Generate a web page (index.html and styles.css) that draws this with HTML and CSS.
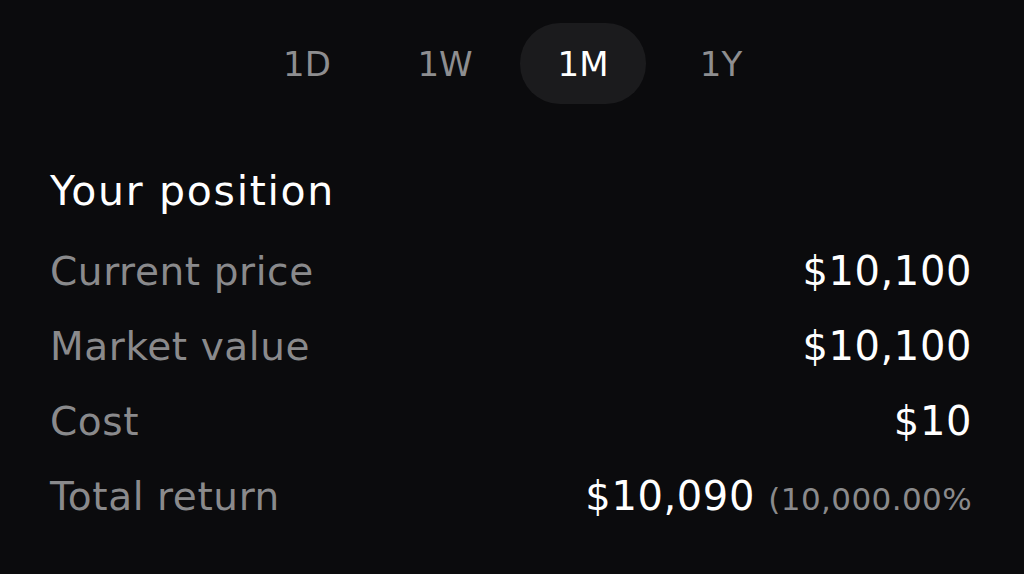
FILE: index.html
```html
<!DOCTYPE html>
<html lang="en">
<head>
    <meta charset="UTF-8">
    <title>Position</title>
    <link rel="stylesheet" href="styles.css">
</head>
<body>
    <nav class="range-tabs">
        <button class="range-tab">1D</button>
        <button class="range-tab">1W</button>
        <button class="range-tab active">1M</button>
        <button class="range-tab">1Y</button>
    </nav>

    <section class="position">
        <h2>Your position</h2>
        <div class="row">
            <span class="label">Current price</span>
            <span class="value">$10,100</span>
        </div>
        <div class="row">
            <span class="label">Market value</span>
            <span class="value">$10,100</span>
        </div>
        <div class="row">
            <span class="label">Cost</span>
            <span class="value">$10</span>
        </div>
        <div class="row">
            <span class="label">Total return</span>
            <span class="value">$10,090 <span class="pct">(10,000.00%</span></span>
        </div>
    </section>
</body>
</html>
```

FILE: styles.css
```css
body {
    margin: 0;
    background-color: #0b0b0d;
    color: #fff;
    font-family: "DejaVu Sans", sans-serif;
    height: 574px;
    overflow: hidden;
}

.range-tabs {
    display: flex;
    justify-content: center;
    gap: 12px;
    padding-top: 23px;
    padding-left: 4px;
}

.range-tab {
    width: 126px;
    height: 81px;
    border: none;
    border-radius: 40px;
    background: none;
    color: #8e8e90;
    font-family: inherit;
    font-size: 34px;
    line-height: 81px;
    padding: 0;
    padding-top: 1px;
}

.range-tab.active {
    background-color: #1b1b1d;
    color: #fff;
}

.position {
    padding: 62px 52px 0 50px;
}

.position h2 {
    margin: 0 0 18px;
    font-size: 41px;
    line-height: 50px;
    font-weight: 400;
    letter-spacing: 1.7px;
}

.row {
    display: flex;
    justify-content: space-between;
    align-items: baseline;
    height: 75px;
    line-height: 75px;
}

.label {
    color: #8a8a8c;
    font-size: 39px;
    letter-spacing: 0.6px;
}

.value {
    font-size: 40px;
    letter-spacing: 0.6px;
}

.pct {
    color: #8a8a8c;
    font-size: 31px;
    letter-spacing: 0.4px;
}
```
